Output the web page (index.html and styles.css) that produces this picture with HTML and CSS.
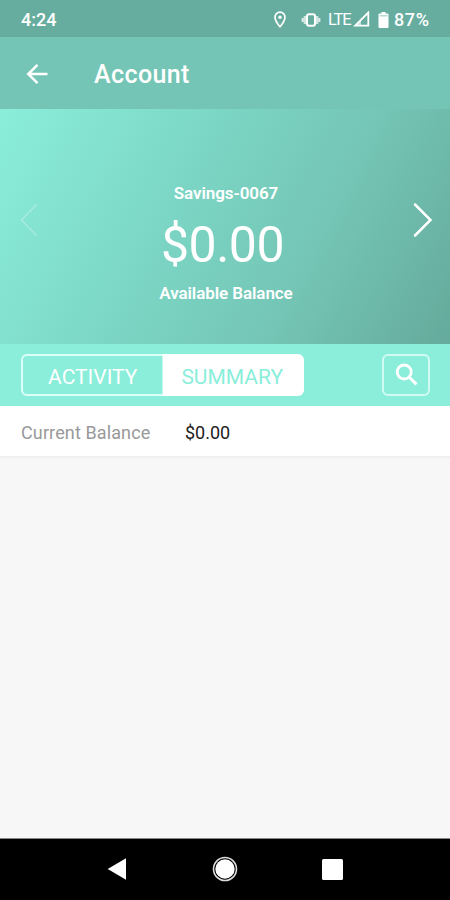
FILE: index.html
```html
<!DOCTYPE html>
<html lang="en">
<head>
<meta charset="utf-8">
<title>Account</title>
<link rel="stylesheet" href="styles.css">
</head>
<body>
<div class="screen">
  <div class="status">
    <span class="time">4:24</span>
    <svg class="pin" width="14" height="18" viewBox="0 0 14 18"><path d="M7 1.200a5 5 0 0 0-5 5C2 9.900 7 15.800 7 15.800S12 9.900 12 6.200a5 5 0 0 0-5-5z" fill="none" stroke="#fff" stroke-width="1.700"/><circle cx="7" cy="6.300" r="1.700" fill="#fff"/></svg>
    <svg class="vibrate" width="20" height="16" viewBox="0 0 20 16"><rect x="6" y="2.200" width="8" height="11.600" rx="2" fill="none" stroke="#fff" stroke-width="2"/><path d="M3.900 4v8M16.100 4v8" stroke="#fff" stroke-width="2.400" opacity=".7"/><path d="M1.700 6v4M18.300 6v4" stroke="#fff" stroke-width="2.200" opacity=".75"/></svg>
    <span class="lte">LTE</span>
    <svg class="signal" width="17" height="17" viewBox="0 0 17 17"><path d="M2.200 14.700L15.300 1.500v13.200z" fill="none" stroke="#fff" stroke-width="1.800"/><path d="M2 15l6-6v6z" fill="#fff" opacity=".6"/></svg>
    <svg class="battery" width="11" height="18" viewBox="0 0 11 18"><path d="M3.500 1h4v1.500h2q1 0 1 1V16q0 1-1 1h-8q-1 0-1-1V3.500q0-1 1-1h2z" fill="#fff"/><path d="M1.500 4h8v1.500h-8z" fill="#67ad9f" opacity=".45"/></svg>
    <span class="percent">87%</span>
  </div>
  <header class="appbar">
    <svg class="back" width="24" height="24" viewBox="0 0 24 24"><path d="M22.500 12H3M12.500 2.800L3.200 12l9.300 9.200" fill="none" stroke="#fff" stroke-width="2.500"/></svg>
    <h1>Account</h1>
  </header>
  <section class="hero">
    <svg class="prev" width="20" height="36" viewBox="0 0 20 36"><path d="M17.500 2.500L2.500 18l15 15.500" fill="none" stroke="#fff" stroke-width="1.500"/></svg>
    <div class="balance">
      <div class="name">Savings-0067</div>
      <div class="amount">$0.00</div>
      <div class="caption">Available Balance</div>
    </div>
    <svg class="next" width="20" height="36" viewBox="0 0 20 36"><path d="M2 2.500L17.500 18 2 33.500" fill="none" stroke="#fff" stroke-width="2.500" stroke-linecap="round"/></svg>
  </section>
  <nav class="toolbar">
    <div class="tabs">
      <div class="tab">ACTIVITY</div>
      <div class="tab active">SUMMARY</div>
    </div>
    <div class="search">
      <svg width="24" height="24" viewBox="0 0 24 24"><circle cx="9.200" cy="9" r="7" fill="none" stroke="#fff" stroke-width="2.800"/><path d="M14.300 14.200l7.200 7.200" stroke="#fff" stroke-width="3"/></svg>
    </div>
  </nav>
  <div class="row"><span class="label">Current Balance</span><span class="value">$0.00</span></div>
  <main class="blank"></main>
  <footer class="navbar">
    <svg width="20" height="24" viewBox="0 0 20 24"><path d="M.7 12L19 1.200v21.600z" fill="#fff"/></svg>
    <svg width="26" height="26" viewBox="0 0 26 26"><circle cx="13" cy="13" r="11.500" fill="none" stroke="#ddd" stroke-width="1.600"/><circle cx="13" cy="13" r="9.700" fill="#fff"/></svg>
    <svg width="21" height="21" viewBox="0 0 21 21"><rect width="21" height="21" rx="1.500" fill="#fff"/></svg>
  </footer>
</div>
</body>
</html>
```
FILE: styles.css
```css
* { box-sizing: border-box; }
body { margin: 0; font-family: Roboto, sans-serif; color: #fff; }
svg { display: block; flex: none; }
.screen { width: 450px; height: 900px; display: flex; flex-direction: column; overflow: hidden; background: #f7f7f7; }
.status { height: 37px; flex: none; display: flex; align-items: center; padding: 2px 20px 0 21px; background: #67ad9f; font-size: 18px; font-weight: 500; }
.time { width: 252px; }
.vibrate { margin-left: 14px; }
.lte { margin-left: 7px; width: 23px; font-size: 16.5px; font-weight: 400; letter-spacing: -1.100px; }
.signal { margin-left: 2px; }
.battery { margin-left: 8px; }
.percent { margin-left: 5px; white-space: nowrap; letter-spacing: .6px; }
.appbar { height: 72px; flex: none; display: flex; align-items: center; padding-left: 25px; background: #74c5b5; }
.appbar .back { margin-top: 1px; }
.appbar h1 { margin: 4px 0 0 45px; font-size: 25px; line-height: 30px; font-weight: 500; letter-spacing: .4px; }
.hero { height: 235px; flex: none; display: flex; justify-content: space-between; padding: 0 17px 0 19px; background: linear-gradient(117deg, #8aeedb 0%, #7bd4c3 42%, #74c5b5 68%, #65aa9c 100%); }
.prev, .next { margin-top: 93px; }
.prev { opacity: .28; }
.balance { padding-top: 73px; text-align: center; white-space: nowrap; }
.name, .caption { font-size: 17px; line-height: 22px; font-weight: 600; letter-spacing: -.08px; }
.amount { font-size: 50px; line-height: 58px; margin: 12px 0 8px; padding-right: 7px; letter-spacing: -.5px; }
.toolbar { height: 62px; flex: none; display: flex; justify-content: space-between; padding: 10px 20px 0 21px; background: #8aeeda; }
.tabs { width: 283px; height: 42px; display: flex; border: 2px solid #dcfff8; border-radius: 6px; background: #8aeeda; }
.tab { flex: 1; text-align: center; font-size: 21px; line-height: 42px; }
.tab.active { background: #fff; color: #8aeeda; border-radius: 0 4px 4px 0; box-shadow: 0 0 0 2px #fff; clip-path: inset(-2px -2px -2px 0 round 0 6px 6px 0); height: 38px; }
.search { width: 48px; height: 42px; display: flex; justify-content: center; padding: 7px 0 0 2px; border: 2px solid #d0fbf2; border-radius: 6px; }
.row { height: 52px; flex: none; display: flex; align-items: center; padding-left: 21px; background: #fff; border-bottom: 2px solid #efefef; font-size: 18px; padding-top: 3px; }
.label { width: 164px; color: #999; letter-spacing: .12px; }
.value { color: #222; }
.blank { flex: 1; }
.navbar { height: 62px; flex: none; display: flex; align-items: center; background: #000; border-top: 1px solid #888; padding-left: 107px; padding-bottom: 1px; }
.navbar svg + svg { margin-left: 85px; }
.navbar svg:last-child { margin-left: 84px; }
```
